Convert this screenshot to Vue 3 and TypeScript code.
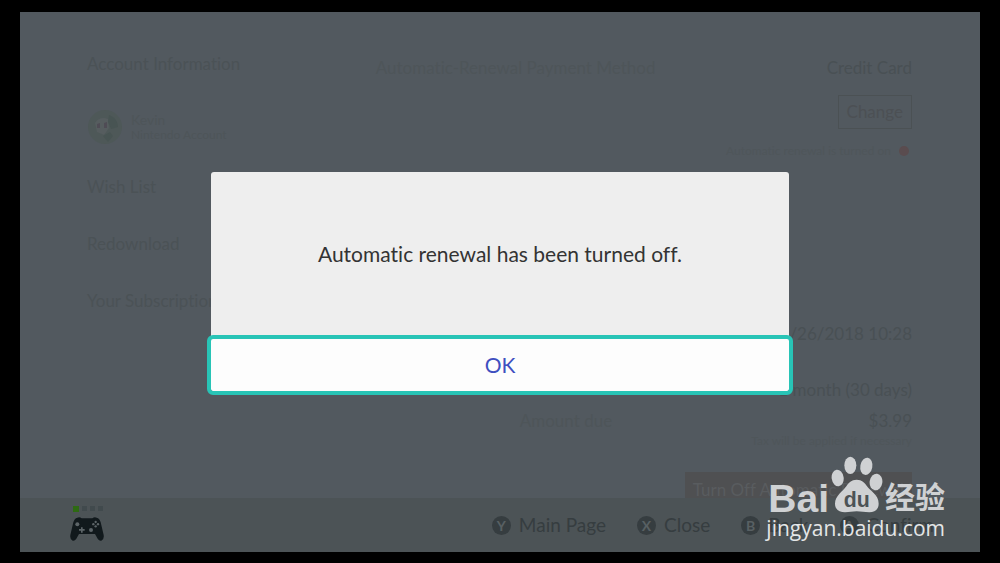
<script setup lang="ts">
interface Action {
  key: string
  label: string
}

const menu: string[] = ['Wish List', 'Redownload', 'Your Subscriptions']
const pads: number[] = [1, 2, 3, 4]
const actions: Action[] = [
  { key: 'Y', label: 'Main Page' },
  { key: 'X', label: 'Close' },
  { key: 'B', label: 'Back' },
  { key: 'A', label: 'Confirm' },
]
</script>

<template>
  <div class="frame">
    <div class="screen">
      <div class="content">
        <nav class="side">
          <a class="item" href="#">Account Information</a>
          <div class="account">
            <svg class="avatar" viewBox="0 0 36 36" aria-hidden="true">
              <circle cx="18" cy="18" r="17" fill="#4e5858" />
              <path d="M8 14c3-5 8-6 13-4l1 9-5 7-7-3z" fill="#565d5f" />
              <path d="M22 6c6 2 9 7 9 12l-7 2-3-7z M16 27l7-4 3 4-5 6z" fill="#485453" />
              <path d="M10 15l3-1v5h-3z M17 14l3-1v6h-3z" fill="#4f4c55" />
            </svg>
            <div>
              <div class="nick">Kevin</div>
              <div class="mail">Nintendo Account</div>
            </div>
          </div>
          <a v-for="m in menu" :key="m" class="item" href="#">{{ m }}</a>
        </nav>
        <main class="main">
          <div class="row pay">
            <span class="faint">Automatic-Renewal Payment Method</span>
            <span>Credit Card</span>
          </div>
          <button class="change" type="button">Change</button>
          <div class="note">Automatic renewal is turned on <i class="dot"></i></div>
          <div class="date">09/26/2018 10:28</div>
          <div class="term">1 month (30 days)</div>
          <div class="row due">
            <span class="faint">Amount due</span>
            <span>$3.99</span>
          </div>
          <div class="tax">Tax will be applied if necessary</div>
          <button class="turn" type="button">Turn Off Automatic Renewal</button>
        </main>
      </div>
      <footer class="bar">
        <div class="player">
          <div class="leds"><i v-for="p in pads" :key="p" :class="{ on: p === 1 }"></i></div>
          <svg class="pad" viewBox="0 0 102 72" aria-hidden="true">
            <path
              d="M22 2 Q29 -1 35 4 H67 Q73 -1 80 2 Q89 4 92 16 L101 54 Q103 68 94 71 Q88 73 83 65 L75 51 H27 L19 65 Q14 73 8 71 Q-1 68 1 54 L10 16 Q13 4 22 2Z"
              fill="#11191c" />
            <g fill="#5d6568">
              <circle cx="22" cy="22" r="6" />
              <circle cx="63" cy="39" r="6" />
              <path d="M33 31h5v5h6v5h-6v6h-5v-6h-6v-5h6z" />
              <circle cx="77" cy="15" r="3.5" />
              <circle cx="77" cy="28" r="3.5" />
              <circle cx="70" cy="21.5" r="3.5" />
              <circle cx="84" cy="21.5" r="3.5" />
            </g>
          </svg>
        </div>
        <div class="actions">
          <button v-for="a in actions" :key="a.key" class="action" type="button">
            <b class="key">{{ a.key }}</b>{{ a.label }}
          </button>
        </div>
      </footer>
    </div>

    <div class="overlay">
      <div class="dialog" role="dialog" aria-labelledby="message">
        <p id="message" class="message">Automatic renewal has been turned off.</p>
        <button class="ok" type="button">OK</button>
      </div>
    </div>

    <div class="mark">
      <div class="brand">
        <span class="bai">Bai</span>
        <svg class="paw" viewBox="0 0 156 171" aria-hidden="true">
          <g fill="#cfd1d3">
            <ellipse cx="20" cy="66" rx="18" ry="25" transform="rotate(-8 20 66)" />
            <ellipse cx="58" cy="28" rx="18" ry="26" />
            <ellipse cx="106" cy="31" rx="18" ry="26" transform="rotate(10 106 31)" />
            <ellipse cx="135" cy="78" rx="19" ry="25" transform="rotate(8 135 78)" />
            <path
              d="M77 71 C93 71 101 80 108 91 C118 106 143 116 143 143 C143 160 131 169 115 169 C100 169 91 166 77 166 C63 166 56 169 42 169 C25 169 12 160 12 143 C12 119 36 106 46 91 C53 80 61 71 77 71Z" />
          </g>
          <text x="77" y="153" text-anchor="middle" class="du">du</text>
        </svg>
        <span class="jy">经验</span>
      </div>
      <div class="site">jingyan.baidu.com</div>
    </div>
  </div>
</template>

<style>
body {
  margin: 0;
  background: #000;
}
</style>

<style scoped>
.frame {
  position: relative;
  box-sizing: border-box;
  height: 100vh;
  padding: 12px 20px 11px;
  background: #000;
  font-family: Lato, "Liberation Sans", sans-serif;
  font-size: 17px;
  font-variant-ligatures: none;
  line-height: 24px;
  color: #495054;
}
button {
  font: inherit;
  font-variant-ligatures: none;
  color: inherit;
  background: none;
  border: 0;
  padding: 0;
}
.screen {
  display: flex;
  flex-direction: column;
  height: 100%;
  background: #52595f;
}
.content {
  flex: 1;
  min-height: 0;
  overflow: hidden;
  display: flex;
  justify-content: space-between;
  padding: 0 68px 0 67px;
}
.side {
  display: flex;
  flex-direction: column;
  gap: 33px;
  padding-top: 40px;
}
.item {
  color: #4b5256;
  text-decoration: none;
}
.account {
  display: flex;
  align-items: center;
  gap: 8px;
  height: 36px;
  margin-bottom: -3px;
  color: #4e5559;
}
.avatar {
  width: 36px;
  height: 36px;
}
.nick {
  font-size: 14px;
  line-height: 16px;
}
.mail {
  font-size: 12px;
  line-height: 14px;
}
.main {
  display: flex;
  flex-direction: column;
  align-items: flex-end;
  flex: 0 0 65%;
  padding-top: 44px;
}
.main > * {
  flex-shrink: 0;
}
.row {
  display: flex;
  justify-content: space-between;
  box-sizing: border-box;
  width: 100%;
}
.faint {
  color: #4e5559;
}
.change {
  box-sizing: border-box;
  margin-top: 15px;
  height: 34px;
  padding: 0 8px;
  border: 1px solid #4b5154;
  color: #4c5054;
}
.note {
  display: flex;
  align-items: center;
  gap: 8px;
  margin-top: 12px;
  padding-right: 3px;
  font-size: 12px;
  line-height: 20px;
  color: #4f565a;
}
.dot {
  width: 10px;
  height: 10px;
  border-radius: 50%;
  background: #5a4c4f;
}
.date {
  margin-top: 161px;
}
.term {
  margin-top: 32px;
}
.due {
  margin-top: 7px;
  padding-left: 144px;
}
.tax {
  font-size: 12px;
  line-height: 16px;
  color: #4f565a;
}
.turn {
  margin-top: 23px;
  height: 36px;
  padding: 0 8px;
  background: #4f5052;
  color: #595c5f;
}
.bar {
  display: flex;
  align-items: center;
  justify-content: space-between;
  height: 54px;
  padding: 0 46px 0 50px;
  background: #4c5356;
}
.player {
  display: flex;
  flex-direction: column;
  gap: 5px;
  width: 36px;
  padding-bottom: 4px;
}
.leds {
  display: flex;
  align-items: center;
  gap: 3px;
  padding-left: 3px;
}
.leds i {
  width: 5px;
  height: 5px;
  background: #414a4d;
}
.leds .on {
  width: 6px;
  height: 6px;
  background: #2e6a13;
}
.pad {
  width: 34px;
  height: 24px;
}
.actions {
  display: flex;
  gap: 31px;
}
.action {
  display: flex;
  align-items: center;
  gap: 8px;
  font-size: 19px;
  color: #363d40;
}
.key {
  width: 19px;
  height: 19px;
  border-radius: 50%;
  background: #363d40;
  color: #586063;
  font-size: 14px;
  line-height: 19px;
  text-align: center;
}
.overlay {
  position: absolute;
  inset: 0;
  display: grid;
  place-items: center;
}
.dialog {
  width: min(578px, 90%);
  border-radius: 3px;
  background: #eee;
}
.message {
  margin: 0;
  padding: 70px 20px 73px;
  font-size: 21px;
  line-height: 24px;
  text-align: center;
  color: #333;
}
.ok {
  display: block;
  width: 100%;
  height: 52px;
  border-radius: 2px;
  outline: 4px solid #28c4b6;
  background: #fdfdfd;
  font-size: 21px;
  color: #3f4fc0;
}
.mark {
  position: absolute;
  right: 55px;
  bottom: 20px;
  color: #e4e6e7;
}
.brand {
  display: flex;
  align-items: flex-end;
  justify-content: flex-end;
  gap: 2px;
  color: #cfd1d3;
  font-weight: 700;
}
.bai {
  font-family: "Liberation Sans", Arial, sans-serif;
  font-size: 39px;
  line-height: 28px;
}
.paw {
  width: 52px;
  height: 57px;
}
.du {
  font-family: "Liberation Sans", Arial, sans-serif;
  font-size: 64px;
  font-weight: 700;
  fill: #4c5356;
}
.jy {
  font-family: "Noto Sans CJK SC", sans-serif;
  font-size: 30px;
  line-height: 36px;
}
.site {
  font-family: "Open Sans", "Noto Sans", sans-serif;
  font-size: 21px;
  line-height: 30px;
}
</style>
